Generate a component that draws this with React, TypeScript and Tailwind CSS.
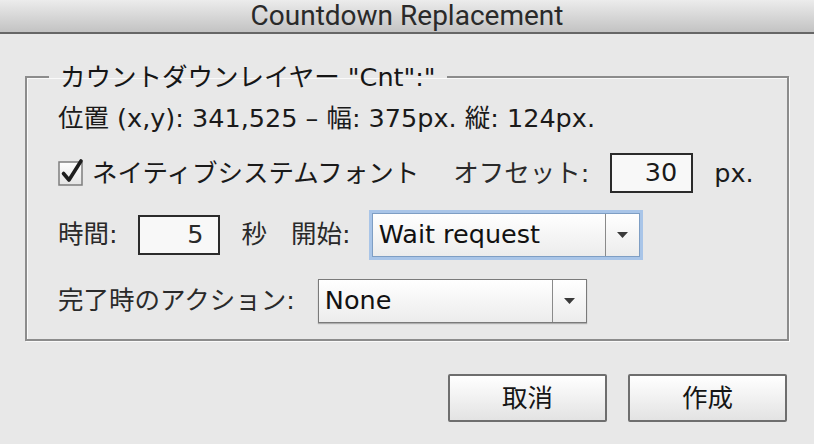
const font = "font-['DejaVu_Sans','Noto_Sans_CJK_JP',sans-serif]";

function Checkbox() {
  return (
    <svg width="28" height="28" viewBox="0 0 28 28" className="overflow-visible shrink-0">
      <defs>
        <linearGradient id="cb" x1="0" y1="0" x2="0" y2="1">
          <stop offset="0" stopColor="#ffffff" />
          <stop offset="1" stopColor="#e4e4e4" />
        </linearGradient>
      </defs>
      <rect x="1" y="3" width="23" height="23" fill="url(#cb)" stroke="#7d7d7d" strokeWidth="1.5" />
      <path d="M5.5 14.5 L11 21 L23 2" fill="none" stroke="#1e1e1e" strokeWidth="3.6" strokeLinecap="round" strokeLinejoin="round" />
    </svg>
  );
}

function NumberBox({ value, width }: { value: string; width: string }) {
  return (
    <div
      className={`${width} h-[40px] border-2 border-[#2b2b2b] bg-[#f8f8f8] flex items-center justify-end pr-[14px] text-[25.5px] leading-none`}
    >
      {value}
    </div>
  );
}

function Select({ value, width, focused }: { value: string; width: string; focused?: boolean }) {
  return (
    <div
      className={`${width} h-[44px] flex border bg-linear-to-b from-white to-[#ececec] ${
        focused ? "border-[#7e9ec4] ring-3 ring-[#a9c5e8]" : "border-[#7a7a7a] shadow-[0_1px_1px_rgba(0,0,0,0.25)]"
      }`}
    >
      <div className="flex-1 flex items-center pl-[6px] text-[25.5px] text-[#111]">{value}</div>
      <div className="w-[34px] border-l border-[#8a8a8a] flex items-center justify-center">
        <svg width="11" height="6" viewBox="0 0 11 6">
          <path d="M0 0 H11 L5.5 6 Z" fill="#3a3a3a" />
        </svg>
      </div>
    </div>
  );
}

function Button({ label }: { label: string }) {
  return (
    <button className="w-[159px] h-[48px] border-2 border-[#6e6e6e] rounded-[2px] bg-linear-to-b from-white to-[#e3e3e3] text-[25.5px] text-[#151515] flex items-center justify-center">
      {label}
    </button>
  );
}

export default function App() {
  return (
    <div className={`w-[814px] h-[444px] bg-[#e8e8e8] flex flex-col overflow-hidden text-[#1a1a1a] ${font}`}>
      <div className="h-[34px] shrink-0 border-b-2 border-[#666] bg-linear-to-b from-[#ececec] to-[#c3c3c3] flex items-center justify-center">
        <span className="text-[28px] leading-none text-[#2a2a2a] font-['Roboto',sans-serif]">
          Countdown Replacement
        </span>
      </div>

      <div className="px-[25px] mt-[28px]">
        <fieldset className="border-2 border-[#8c8c8c] shadow-[1px_1px_0_#fafafa,inset_1px_1px_0_#fafafa] pb-[16px]">
          <legend className="ml-[22px] px-[11px] leading-[30px] text-[25.5px] text-[#161616]">
            カウントダウンレイヤー "Cnt":"
          </legend>

          <div className="pl-[31px]">
            <div className="mt-[11px] h-[30px] flex items-center text-[25.5px]">
              位置 (x,y): 341,525 – 幅: 375px. 縦: 124px.
            </div>

            <div className="mt-[20px] h-[40px] flex items-center text-[25.5px]">
              <Checkbox />
              <span className="ml-[6px]">ネイティブシステムフォント</span>
              <span className="ml-[34px] text-[#2a2a2a]">オフセット:</span>
              <div className="ml-[21px]">
                <NumberBox value="30" width="w-[83px]" />
              </div>
              <span className="ml-[21px]">px.</span>
            </div>

            <div className="mt-[19px] h-[45px] flex items-center text-[25.5px] text-[#2a2a2a]">
              <span>時間:</span>
              <div className="ml-[20px]">
                <NumberBox value="5" width="w-[82px]" />
              </div>
              <span className="ml-[22px]">秒</span>
              <span className="ml-[24px]">開始:</span>
              <div className="ml-[21px]">
                <Select value="Wait request" width="w-[268px]" focused />
              </div>
            </div>

            <div className="mt-[21px] h-[45px] flex items-center text-[25.5px] text-[#2a2a2a]">
              <span>完了時のアクション:</span>
              <div className="ml-[23px]">
                <Select value="None" width="w-[269px]" />
              </div>
            </div>
          </div>
        </fieldset>
      </div>

      <div className="mt-[33px] flex justify-end gap-[21px] pr-[27px]">
        <Button label="取消" />
        <Button label="作成" />
      </div>
    </div>
  );
}
